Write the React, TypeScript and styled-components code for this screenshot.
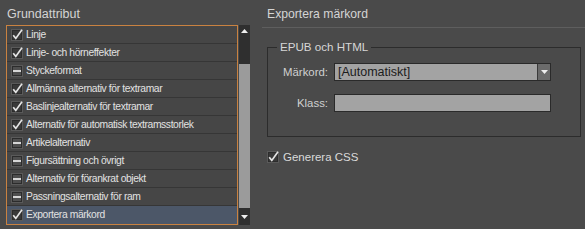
import React from "react";
import styled, { createGlobalStyle } from "styled-components";

const Global = createGlobalStyle`
  html, body { margin: 0; padding: 0; background: #4a4a4a; }
  body {
    font-family: "Liberation Sans", Arial, sans-serif;
    width: 585px;
    height: 229px;
    overflow: hidden;
  }
  * { box-sizing: border-box; }
`;

const Page = styled.div`
  display: flex;
  gap: 12px;
  height: 229px;
`;

const LeftCol = styled.div`
  width: 250px;
  padding-left: 6px;
  display: flex;
  flex-direction: column;
`;

const Heading = styled.div`
  margin: 7px 0 4px 1px;
  font-size: 12.5px;
  line-height: 14px;
  color: #d4d4d4;
`;

const ListWrap = styled.div`
  display: flex;
  gap: 1px;
`;

const ListBox = styled.div`
  width: 232px;
  border: 1px solid #c98241;
  display: flex;
  flex-direction: column;
`;

const Row = styled.div<{ $selected?: boolean }>`
  height: 18px;
  display: flex;
  align-items: center;
  gap: 3px;
  padding-left: 4px;
  border-bottom: 1px solid #363636;
  background: ${(p) => (p.$selected ? "#4c5768" : "#464646")};
  font-size: 10.3px;
  letter-spacing: -0.38px;
  color: #e2e2e2;
  white-space: nowrap;
  &:last-child { border-bottom-color: transparent; }
`;

const Scrollbar = styled.div`
  width: 11px;
  background: #2f2f2f;
  display: flex;
  flex-direction: column;
  align-items: center;
`;

const Arrow = styled.div<{ $h: number }>`
  height: ${(p) => p.$h}px;
  width: 100%;
  display: flex;
  align-items: center;
  justify-content: center;
`;

const Track = styled.div<{ $h: number }>`
  height: ${(p) => p.$h}px;
`;

const Thumb = styled.div`
  flex: 1;
  width: 100%;
  background: #9b9b9b;
`;

const RightCol = styled.div`
  flex: 1;
  display: flex;
  flex-direction: column;
`;

const RightHeading = styled.div`
  padding: 7px 0 6px 5px;
  border-bottom: 1px solid #5e5e5e;
  font-size: 12.2px;
  line-height: 14px;
  color: #d4d4d4;
`;

const Group = styled.fieldset`
  margin: 12px 4px 0 5px;
  padding: 9px 0 24px 0;
  border: 1px solid #2c2c2c;
  min-width: 0;
`;

const Legend = styled.legend`
  margin-left: 9px;
  padding: 0 3px;
  font-size: 11.6px;
  line-height: 14px;
  color: #d6d6d6;
`;

const FormGrid = styled.div`
  display: grid;
  grid-template-columns: 60px 217px;
  column-gap: 6px;
  row-gap: 13px;
  align-items: center;
`;

const Label = styled.label`
  text-align: right;
  font-size: 11.4px;
  color: #d0d0d0;
`;

const Select = styled.div`
  height: 18px;
  display: flex;
  background: #a3a3a3;
  border: 1px solid #2a2a2a;
`;

const SelectText = styled.div`
  flex: 1;
  padding-left: 3px;
  font-size: 12.5px;
  line-height: 16px;
  color: #1c1c1c;
`;

const SelectButton = styled.div`
  width: 13px;
  background: #6b6b6b;
  border-left: 1px solid #3a3a3a;
  display: flex;
  align-items: center;
  justify-content: center;
`;

const TextInput = styled.div`
  height: 18px;
  background: #a3a3a3;
  border: 1px solid #2a2a2a;
`;

const CheckRow = styled.div`
  margin: 14px 0 0 5px;
  display: flex;
  align-items: center;
  gap: 4px;
  font-size: 11.5px;
  color: #dadada;
`;

const Check = ({ state }: { state: "on" | "mixed" }) => (
  <svg width="12" height="12" viewBox="0 0 12 12" style={{ flex: "none" }}>
    <rect x="0.5" y="0.5" width="11" height="11" fill={state === "on" ? "#393939" : "#4f4f4f"} stroke="#5a5a5a" />
    <rect x="1.5" y="1.5" width="9" height="9" fill="none" stroke="#2c2c2c" />
    {state === "on" ? (
      <path d="M2.2 6.2 L4.8 9.4 L11 0.8" fill="none" stroke="#e4e4e4" strokeWidth="1.7" />
    ) : (
      <rect x="2" y="5" width="8" height="2" fill="#d6d6d6" />
    )}
  </svg>
);

const Tri = ({ up }: { up?: boolean }) => (
  <svg width="7" height="4" viewBox="0 0 7 4">
    <path d={up ? "M0 4 L3.5 0 L7 4 Z" : "M0 0 L7 0 L3.5 4 Z"} fill="#eeeeee" />
  </svg>
);

const items: { label: string; state: "on" | "mixed" }[] = [
  { label: "Linje", state: "on" },
  { label: "Linje- och hörneffekter", state: "on" },
  { label: "Styckeformat", state: "mixed" },
  { label: "Allmänna alternativ för textramar", state: "on" },
  { label: "Baslinjealternativ för textramar", state: "on" },
  { label: "Alternativ för automatisk textramsstorlek", state: "on" },
  { label: "Artikelalternativ", state: "mixed" },
  { label: "Figursättning och övrigt", state: "mixed" },
  { label: "Alternativ för förankrat objekt", state: "mixed" },
  { label: "Passningsalternativ för ram", state: "mixed" },
  { label: "Exportera märkord", state: "on" },
];

export default function App() {
  return (
    <>
      <Global />
      <Page>
        <LeftCol>
          <Heading>Grundattribut</Heading>
          <ListWrap>
            <ListBox>
              {items.map((it, i) => (
                <Row key={it.label} $selected={i === items.length - 1}>
                  <Check state={it.state} />
                  {it.label}
                </Row>
              ))}
            </ListBox>
            <Scrollbar>
              <Arrow $h={12}>
                <Tri up />
              </Arrow>
              <Track $h={27} />
              <Thumb />
              <Arrow $h={17}>
                <Tri />
              </Arrow>
            </Scrollbar>
          </ListWrap>
        </LeftCol>
        <RightCol>
          <RightHeading>Exportera märkord</RightHeading>
          <Group>
            <Legend>EPUB och HTML</Legend>
            <FormGrid>
              <Label>Märkord:</Label>
              <Select>
                <SelectText>[Automatiskt]</SelectText>
                <SelectButton>
                  <Tri />
                </SelectButton>
              </Select>
              <Label>Klass:</Label>
              <TextInput />
            </FormGrid>
          </Group>
          <CheckRow>
            <Check state="on" />
            Generera CSS
          </CheckRow>
        </RightCol>
      </Page>
    </>
  );
}
